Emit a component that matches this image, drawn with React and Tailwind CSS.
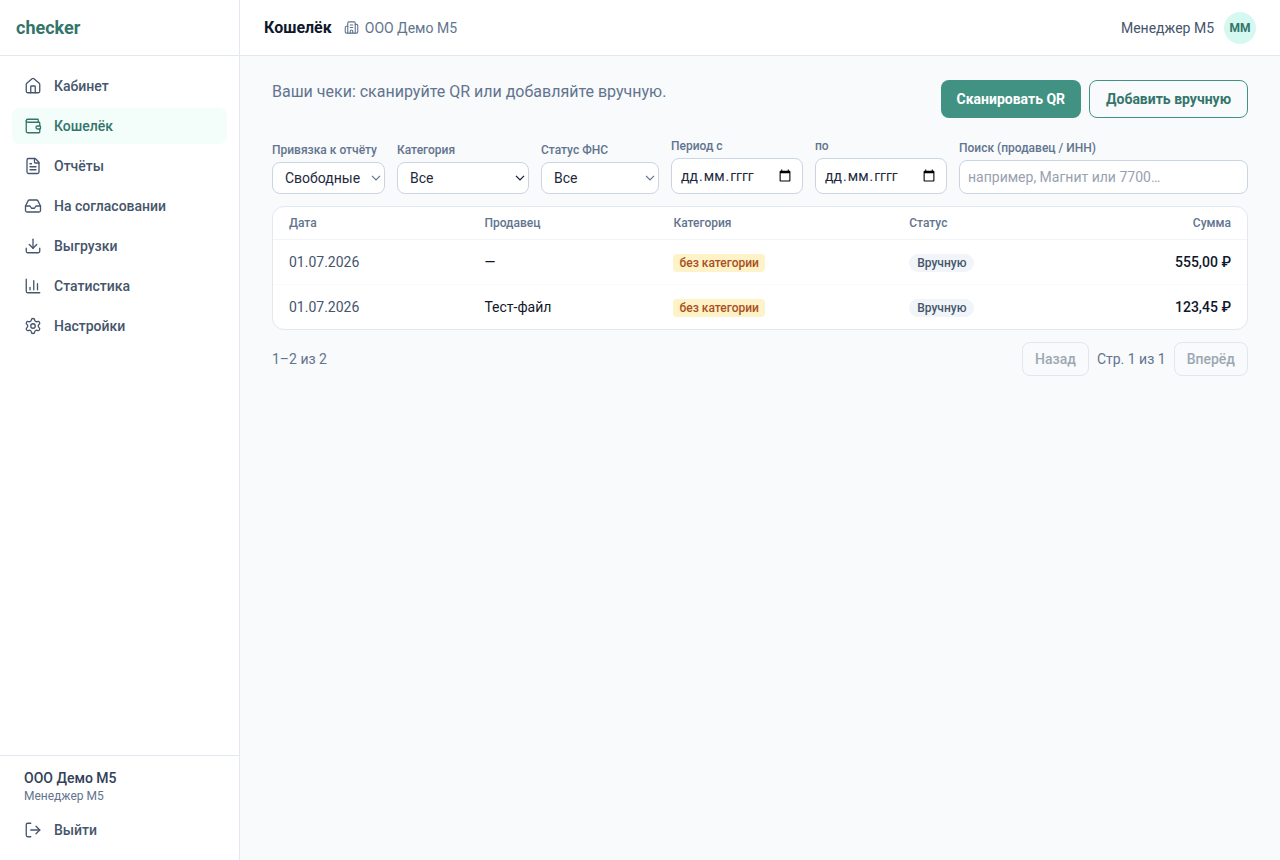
import { useState } from 'react';
import {
  Building2,
  ChartColumn,
  Download,
  FileText,
  House,
  Inbox,
  LogOut,
  Settings,
  Wallet,
} from 'lucide-react';

const NAV_ITEMS = [
  { label: 'Кабинет', icon: House },
  { label: 'Кошелёк', icon: Wallet, active: true },
  { label: 'Отчёты', icon: FileText },
  { label: 'На согласовании', icon: Inbox },
  { label: 'Выгрузки', icon: Download },
  { label: 'Статистика', icon: ChartColumn },
  { label: 'Настройки', icon: Settings },
];

const RECEIPTS = [
  { id: 1, date: '01.07.2026', seller: null, category: 'без категории', status: 'Вручную', total: '555,00 ₽' },
  { id: 2, date: '01.07.2026', seller: 'Тест-файл', category: 'без категории', status: 'Вручную', total: '123,45 ₽' },
];

const labelClass = 'block text-xs font-medium text-slate-500';
const fieldClass = 'block rounded-lg border border-slate-300 bg-white text-sm text-slate-800 outline-none';

function Sidebar() {
  return (
    <aside className="flex w-60 shrink-0 flex-col border-r border-slate-200 bg-white">
      <div className="flex h-14 items-center border-b border-slate-200 px-4">
        <a href="#" className="text-lg font-bold text-[#34756b]">checker</a>
      </div>
      <nav className="flex flex-1 flex-col gap-1 p-3">
        {NAV_ITEMS.map(({ label, icon: Icon, active }) => (
          <a
            key={label}
            href="#"
            aria-current={active ? 'page' : undefined}
            className={
              active
                ? 'flex items-center gap-3 rounded-lg bg-[#f3fdfa] px-3 py-2 text-sm font-medium text-[#34756b]'
                : 'flex items-center gap-3 rounded-lg px-3 py-2 text-sm font-medium text-slate-600'
            }
          >
            <Icon size={18} strokeWidth={1.75} />
            {label}
          </a>
        ))}
      </nav>
      <div className="border-t border-slate-200 p-3">
        <div className="px-3 pb-2">
          <p className="text-sm font-medium text-slate-700">ООО Демо М5</p>
          <p className="text-xs text-slate-500">Менеджер М5</p>
        </div>
        <button
          type="button"
          className="flex w-full items-center gap-3 rounded-lg px-3 py-2 text-sm font-medium text-slate-600"
        >
          <LogOut size={18} strokeWidth={1.75} />
          Выйти
        </button>
      </div>
    </aside>
  );
}

function Header() {
  return (
    <header className="flex h-14 shrink-0 items-center justify-between border-b border-slate-200 bg-white px-6">
      <div className="flex items-center gap-3">
        <h1 className="text-base font-bold text-slate-900">Кошелёк</h1>
        <span className="flex items-center gap-1.5 text-sm text-slate-500">
          <Building2 size={15} strokeWidth={1.75} />
          ООО Демо М5
        </span>
      </div>
      <div className="flex items-center gap-2.5">
        <span className="text-sm text-slate-600">Менеджер М5</span>
        <span className="flex size-8 items-center justify-center rounded-full bg-[#d5f8f0] text-xs font-bold text-[#34756b]">
          ММ
        </span>
      </div>
    </header>
  );
}

function SelectFilter({ id, label, options, className, arrowClass = 'text-slate-500' }) {
  return (
    <div className="flex flex-col gap-1">
      <label htmlFor={id} className={labelClass}>{label}</label>
      <div className="relative">
        <select id={id} className={`${fieldClass} h-8 appearance-none pl-3 pr-5 ${className}`}>
          {options.map((option) => (
            <option key={option}>{option}</option>
          ))}
        </select>
        <svg
          aria-hidden="true"
          viewBox="0 0 10 6"
          fill="none"
          stroke="currentColor"
          strokeWidth="1.2"
          className={`pointer-events-none absolute right-1 top-[13px] h-1.5 w-2.5 ${arrowClass}`}
        >
          <path d="M1 0.8 5 4.8 9 0.8" />
        </svg>
      </div>
    </div>
  );
}

function DateFilter({ id, label }) {
  const [value, setValue] = useState('');

  return (
    <div className="flex flex-col gap-1">
      <label htmlFor={id} className={labelClass}>{label}</label>
      <div className="relative">
        <input
          id={id}
          type="date"
          value={value}
          onChange={(e) => setValue(e.target.value)}
          className={`${fieldClass} h-9 w-[132px] px-2 ${value ? '' : '[&::-webkit-datetime-edit]:opacity-0'}`}
        />
        {!value && (
          <span
            aria-hidden="true"
            className="pointer-events-none absolute inset-y-0 left-2.5 flex items-center text-sm text-slate-800"
          >
            <span className="pr-px">дд</span>.<span className="px-px">мм</span>.
            <span className="px-px">гггг</span>
          </span>
        )}
      </div>
    </div>
  );
}

function Filters() {
  return (
    <div className="flex items-end gap-3">
      <SelectFilter
        id="binding"
        label="Привязка к отчёту"
        options={['Свободные', 'В отчёте', 'Все']}
        className="w-[113px]"
      />
      <SelectFilter
        id="category"
        label="Категория"
        options={['Все', 'Без категории']}
        className="w-[132px]"
        arrowClass="text-slate-900"
      />
      <SelectFilter id="status" label="Статус ФНС" options={['Все', 'Проверен', 'Вручную']} className="w-[118px]" />
      <DateFilter id="date-from" label="Период с" />
      <DateFilter id="date-to" label="по" />
      <div className="flex min-w-0 flex-1 flex-col gap-1">
        <label htmlFor="search" className={labelClass}>Поиск (продавец / ИНН)</label>
        <input
          id="search"
          type="text"
          placeholder="например, Магнит или 7700…"
          className={`${fieldClass} w-full px-2 py-1.5 placeholder:text-gray-400`}
        />
      </div>
    </div>
  );
}

function ReceiptsTable() {
  return (
    <div className="overflow-hidden rounded-xl border border-slate-200 bg-white">
      <table className="w-full text-left text-sm">
        <thead>
          <tr className="border-b border-slate-100 text-xs text-slate-500">
            <th className="px-4 py-2 font-medium">Дата</th>
            <th className="px-4 py-2 font-medium">Продавец</th>
            <th className="px-4 py-2 font-medium">Категория</th>
            <th className="px-4 py-2 font-medium">Статус</th>
            <th className="px-4 py-2 text-right font-medium">Сумма</th>
          </tr>
        </thead>
        <tbody>
          {RECEIPTS.map((receipt) => (
            <tr key={receipt.id} className="border-b border-slate-50 last:border-0">
              <td className="px-4 py-3 text-slate-600">{receipt.date}</td>
              <td className="px-4 py-3 text-slate-900">{receipt.seller || '—'}</td>
              <td className="px-4 py-3">
                <span className="rounded bg-[#fdf2c8] px-1.5 py-0.5 text-xs font-medium text-[#a9501c]">
                  {receipt.category}
                </span>
              </td>
              <td className="px-4 py-3">
                <span className="rounded-full bg-slate-100 px-2 py-0.5 text-xs font-medium text-slate-600">
                  {receipt.status}
                </span>
              </td>
              <td className="px-4 py-3 text-right font-medium text-slate-900">{receipt.total}</td>
            </tr>
          ))}
        </tbody>
      </table>
    </div>
  );
}

function Pagination() {
  const buttonClass = 'rounded-lg border border-slate-300 px-3 py-1.5 font-medium text-slate-600 disabled:opacity-50';

  return (
    <div className="flex items-center justify-between text-sm text-slate-500">
      <span>1–2 из 2</span>
      <div className="flex items-center gap-2">
        <button type="button" disabled className={buttonClass}>Назад</button>
        <span>Стр. 1 из 1</span>
        <button type="button" disabled className={buttonClass}>Вперёд</button>
      </div>
    </div>
  );
}

export default function App() {
  return (
    <div className="flex min-h-screen bg-slate-50 font-['Roboto',sans-serif] text-slate-900">
      <Sidebar />
      <div className="flex min-w-0 flex-1 flex-col">
        <Header />
        <main className="px-8 py-6">
          <div className="mb-5 flex items-start justify-between gap-4">
            <p className="text-base text-slate-500">Ваши чеки: сканируйте QR или добавляйте вручную.</p>
            <div className="flex gap-2">
              <button type="button" className="rounded-lg bg-[#429284] px-4 py-2 text-sm font-bold text-white">
                Сканировать QR
              </button>
              <button
                type="button"
                className="rounded-lg border border-[#429284] px-4 py-2 text-sm font-bold text-[#34756b]"
              >
                Добавить вручную
              </button>
            </div>
          </div>
          <div className="flex flex-col gap-3">
            <Filters />
            <ReceiptsTable />
            <Pagination />
          </div>
        </main>
      </div>
    </div>
  );
}
